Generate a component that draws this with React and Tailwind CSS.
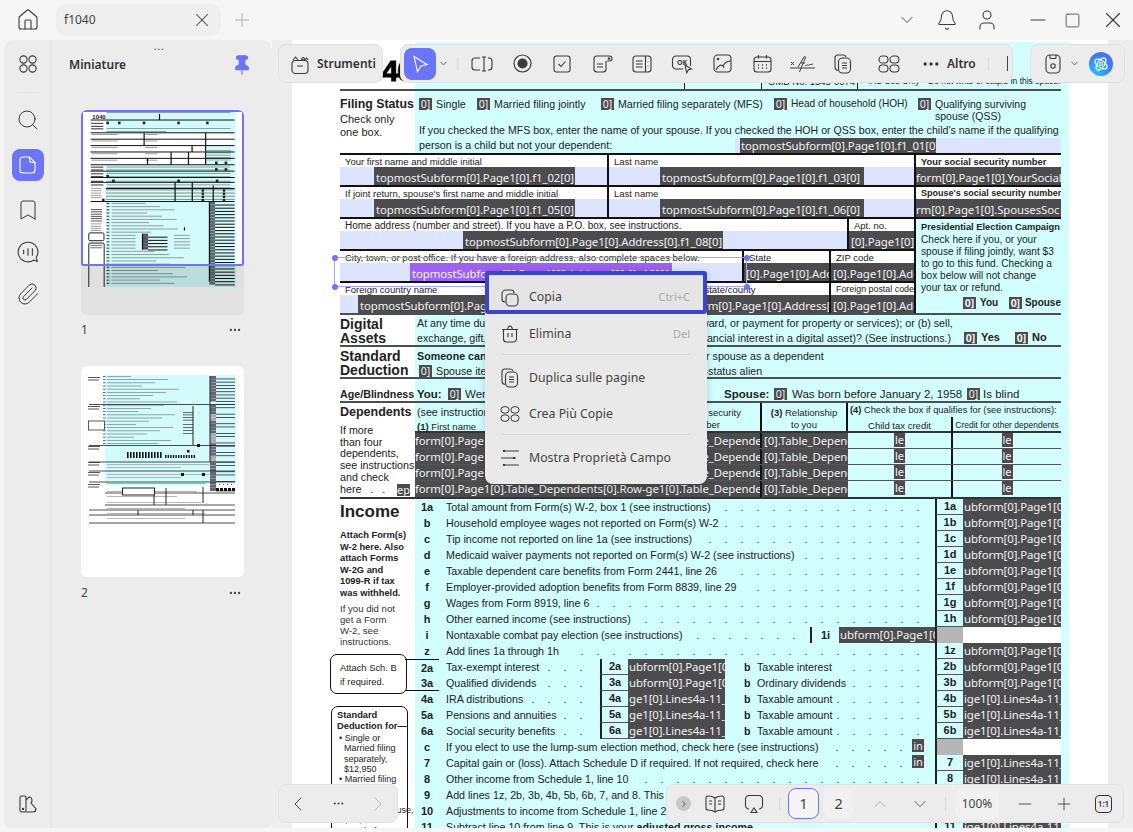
import React from 'react';
import { Home, X, Plus, ChevronDown, ChevronUp, ChevronLeft, ChevronRight, Bell, User, Minus, Square, Search, Bookmark, Paperclip, Pin, MoreHorizontal } from 'lucide-react';

const dark = "bg-[#4c4c4e] text-[#f2f2f2] font-['Noto_Sans',sans-serif] tracking-[-0.1px] whitespace-nowrap overflow-hidden";

function GridIcon({ wide }) {
  return (
    <svg width="22" height="20" viewBox="0 0 22 20" fill="none" stroke="#3a3a3a" strokeWidth="1.1">
      {wide ? (
        <>
          <rect x="1" y="2" width="9" height="7" rx="3.5" />
          <rect x="12" y="2" width="9" height="7" rx="3.5" />
          <rect x="1" y="11" width="9" height="7" rx="3.5" />
          <rect x="12" y="11" width="9" height="7" rx="3.5" />
        </>
      ) : (
        <>
          <circle cx="6.5" cy="5.5" r="3.6" />
          <circle cx="15.5" cy="5.5" r="3.6" />
          <circle cx="6.5" cy="14.5" r="3.6" />
          <circle cx="15.5" cy="14.5" r="3.6" />
        </>
      )}
    </svg>
  );
}

function CopyLines() {
  return (
    <svg width="20" height="22" viewBox="0 0 20 22" fill="none" stroke="#3a3a3a" strokeWidth="1.1">
      <path d="M5 17.5C2.8 17 2 16 2 14V5c0-2 1.2-3 3-3h5c1.6 0 2.5.6 3 1.8" />
      <rect x="5.5" y="5" width="12" height="15" rx="4" />
      <path d="M9 10h5M9 12.5h5M9 15h5" />
    </svg>
  );
}

function TopBar() {
  return (
    <div className="h-10 flex items-center text-[#3a3a3a] shrink-0">
      <div className="w-14 flex justify-center"><Home size={24} strokeWidth={1.1} /></div>
      <div className="w-[165px] h-8 rounded-[10px] bg-[#efefef] flex items-center justify-between pl-2 pr-[8px] text-[12px] text-[#444]">
        <span>f1040</span>
        <X size={22} strokeWidth={1.1} />
      </div>
      <div className="ml-[10px] text-[#aaa]"><Plus size={22} strokeWidth={1} /></div>
      <div className="flex-1" />
      <ChevronDown size={20} strokeWidth={1.1} />
      <div className="ml-[19px]"><Bell size={22} strokeWidth={1.1} /></div>
      <div className="ml-[17px]"><User size={24} strokeWidth={1.1} /></div>
      <div className="ml-[27px]"><Minus size={24} strokeWidth={1.1} /></div>
      <div className="ml-[14px]"><Square size={17} strokeWidth={1.1} /></div>
      <div className="ml-[19px] mr-[7px]"><X size={26} strokeWidth={1} /></div>
    </div>
  );
}

function ThumbRows({ rows }) {
  return rows.map((r, i) => <rect key={i} x={r[0]} y={r[1]} width={r[2]} height={r[3] || 4} fill={r[4] || '#777'} />);
}

function Thumb1() {
  const rows = [];
  for (let i = 0; i < 26; i++) {
    const y = 505 + i * 16;
    if (i < 10 || i > 14) rows.push([445, y, 170 + ((i * 73) % 210), 5, '#8d9f9f']);
    else rows.push([445, y, 120, 5, '#8d9f9f'], [757, y, 80, 5, '#8d9f9f'], [600, y - 6, 28, 16, '#556'], [628, y + 9, 97, 5, '#111']);
    rows.push([420, y, 14, 5, '#333']);
    rows.push([935, y - 6, 28, 15, '#5a6a70']);
    rows.push([963, y + 8, 98, 5, '#111']);
  }
  for (let y of [50, 130, 145, 323, 337, 355, 371, 394, 412, 426]) rows.push([420, y, y === 145 ? 300 : 620, 5, '#8d9f9f']);
  for (let y of [104, 119, 131, 323, 337, 356, 370, 394, 412]) rows.push([342, y, 62, 6, '#555']);
  for (let y of [161, 193, 225, 257, 289]) rows.push([345, y, 130, 4, '#888'], [614, y, 60, 4, '#888']);
  for (let y of [240, 252, 264, 276, 288]) rows.push([922, y, 120, 4, '#7f9393']);
  for (let y of [430, 442, 454, 465, 477]) rows.push([342, y, 52, 4, '#888']);
  for (let y of [536, 547, 559, 570, 581, 593]) rows.push([342, y, 55, 5, '#555']);
  for (let y of [608, 620, 630, 641]) rows.push([342, y, 50, 4, '#888']);
  for (let x of [419, 477, 601, 774, 918]) rows.push([x, 98, 13, 13, '#222']);
  for (let [x, y] of [[963, 298], [1011, 298], [963, 331], [1011, 331], [419, 365], [448, 388], [774, 388], [967, 388], [397, 484]]) rows.push([x, y, 13, 13, '#222']);
  for (let y of [437, 453, 469, 485]) rows.push([417, y, 644, 5, '#8a8a8a'], [896, y, 12, 12, '#222'], [1002, y, 12, 12, '#222']);
  return (
    <svg viewBox="292 40 816 1056" className="w-full h-full block">
      <rect x="292" y="40" width="816" height="1056" fill="#fff" />
      <rect x="415" y="42" width="654" height="1010" fill="#d3fbfb" />
      <rect x="415" y="155" width="646" height="160" fill="#fff" />
      <rect x="916" y="219" width="145" height="96" fill="#d3fbfb" />
      <rect x="963" y="627" width="98" height="16" fill="#fff" />
      <ThumbRows rows={rows} />
      <text x="349" y="84" fontSize="30" fontWeight="900" fontFamily="Liberation Sans" fill="#111">1040</text>
      <path d="M340 90H1061M340 154H1061M340 186H1061M340 218H1061M340 250H1061M340 282H1061M340 314H1061M340 346H1061M340 378H1061M340 402H1061M417 433H1061M340 498H1061" stroke="#111" strokeWidth="5" />
      <path d="M608 154V218M916 154V314M848 218V250M743 250V314M830 250V314M625 282V314M763 402V498M849 402V498M954 418V498M935 498V900M600 659V739M810 627V643M685 60V90" stroke="#111" strokeWidth="6" />
      <rect x="331" y="655" width="76" height="39" rx="6" fill="#fff" stroke="#222" strokeWidth="5" />
      <rect x="331" y="706" width="77" height="300" rx="6" fill="#fff" stroke="#222" strokeWidth="5" />
      <rect x="338" y="715" width="60" height="5" fill="#777" /><rect x="338" y="727" width="60" height="5" fill="#777" />
      <rect x="292" y="820" width="816" height="276" fill="#000" opacity=".12" />
    </svg>
  );
}

function Thumb2() {
  const rows = [];
  for (let i = 0; i < 22; i++) {
    const y = 10 + i * 3.2;
    rows.push([26, y, 24 + ((i * 37) % 50), 0.8, '#7f9393'], [22, y, 2.5, 0.8, '#444']);
  }
  for (let i = 0; i < 36; i++) {
    const y = 10 + i * 3.2;
    if (i !== 8) rows.push([129, y, 6, 3, i > 11 && i < 27 && i % 7 > 3 ? '#aaa' : '#667']);
    if (i % 3 !== 1 || i < 8) rows.push([135, y + 2.6, 19, 0.7, '#111']);
  }
  for (let i = 0; i < 12; i++) rows.push([46 + i * 3, 86, 1.6, 6, '#111']);
  for (let i = 0; i < 12; i++) rows.push([84 + i * 2.6, 89, 1.4, 3, '#111']);
  for (let i = 0; i < 4; i++) rows.push([102, 46 + i * 2.6, 10, 0.6, '#111'], [102, 58 + i * 3, 10, 0.6, '#111']);
  for (let i = 0; i < 5; i++) rows.push([135 + i * 4, 116, 3, 3, '#fff'], [135 + i * 4, 122, 3, 3, '#111']);
  for (let y of [11, 40, 80, 96, 106, 118]) rows.push([7, y, 12, 1, '#555'], [7, y + 2.5, 11, 1, '#555']);
  for (let y of [98, 101, 108, 111, 117, 125, 130, 136, 142, 147, 152]) rows.push([26, y, 70 + (y % 10) * 4, 0.7, '#999']);
  rows.push([106, 84, 2.5, 2.5, '#111'], [116, 78, 3, 3, '#111'], [100, 107, 3, 3, '#111'], [121, 107, 3, 3, '#111']);
  return (
    <svg viewBox="0 0 163 211" className="w-full h-full block">
      <rect x="0" y="0" width="163" height="211" fill="#fff" />
      <rect x="24" y="9" width="131" height="110" fill="#d3fbfb" />
      <ThumbRows rows={rows} />
      <path d="M8 38.5H154M8 79.5H154M8 96H154M8 105H154M8 116H154M24 127H154M24 139H154M8 144H154M8 149H154M8 157H154" stroke="#222" strokeWidth=".8" />
      <path d="M129 10V96M112 40V79M73 129V139M85 122V139M122 121V137M57 144V149M112 144V149M122 144V149M122 149V157" stroke="#222" strokeWidth="1" />
      <rect x="7.5" y="55" width="16" height="9" fill="#fff" stroke="#333" strokeWidth=".8" />
      <rect x="41.5" y="122" width="32" height="7" fill="#fff" stroke="#222" strokeWidth="1" />
    </svg>
  );
}

function Sidebar() {
  return (
    <div className="w-[268px] ml-1 flex bg-[#ececec] rounded-t-[10px] rounded-b-[6px] shrink-0 text-[#3a3a3a]">
      <div className="w-12 border-r border-[#e3e3e3] flex flex-col items-center pt-[14px]">
        <GridIcon />
        <div className="h-px w-5 bg-[#e4e4e4] mt-[18px] mb-[15px]" />
        <Search size={24} strokeWidth={1} />
        <div className="mt-[17px] w-8 h-8 rounded-lg bg-[#6c74f7] flex items-center justify-center">
          <svg width="18" height="20" viewBox="0 0 18 20" fill="none" stroke="#fff" strokeWidth="1.1">
            <path d="M4 2h6.5L16 7.5V15a3 3 0 0 1-3 3H4a3 3 0 0 1-3-3V5a3 3 0 0 1 3-3z" />
            <path d="M10.5 2v3a2.5 2.5 0 0 0 2.5 2.5h3" />
          </svg>
        </div>
        <div className="mt-[17px]"><Bookmark size={24} strokeWidth={1} /></div>
        <div className="mt-[18px]">
          <svg width="24" height="24" viewBox="0 0 22 22" fill="none" stroke="#3a3a3a" strokeWidth="1">
            <path d="M11 2a9 9 0 1 0 5 16.5l3.5 1-1-3.5A9 9 0 0 0 11 2z" />
            <path d="M7 9v4M11 7.5v7M15 7.5v7" />
          </svg>
        </div>
        <div className="mt-[18px]"><Paperclip size={24} strokeWidth={1} /></div>
        <div className="flex-1" />
        <div className="mb-[14px]">
          <svg width="20" height="20" viewBox="0 0 20 20" fill="none" stroke="#3a3a3a" strokeWidth="1.1">
            <rect x="2" y="2" width="6" height="16" rx="1.5" />
            <circle cx="5" cy="15" r=".6" fill="#3a3a3a" />
            <path d="M8 6l3-3c2 0 3 2 3 4l-1 2 5 6c0 2-1 3-3 3H8" />
          </svg>
        </div>
      </div>
      <div className="flex-1 relative px-[29px]">
        <div className="absolute top-[3px] left-[102px] text-[#666] text-[9px] leading-[8px] tracking-[1px] font-bold">...</div>
        <div className="flex items-center justify-between h-[48px] pt-[1px] -ml-3">
          <span className="text-[12px] font-semibold text-[#333]">Miniature</span>
          <span className="-mr-[10px] text-[#6c74f7]"><Pin size={22} fill="#6c74f7" strokeWidth={1.3} /></span>
        </div>
        <div className="mt-[22px] -mx-[0.5px] h-[205px] bg-[#e2e2e2] rounded-[6px] overflow-hidden relative">
          <div className="h-[177px] overflow-hidden"><div className="h-[211px]"><Thumb1 /></div></div>
          <div className="absolute inset-x-0 top-0 h-[156px] border-2 border-[#6c74f7] rounded-[2px]" />
        </div>
        <div className="flex justify-between items-center h-[30px] text-[12px] text-[#444]">
          <span>1</span>
          <MoreHorizontal size={14} className="mr-[1px]" />
        </div>
        <div className="mt-[21px] h-[211px] rounded-[6px] overflow-hidden -mx-[0.5px]"><Thumb2 /></div>
        <div className="flex justify-between items-center h-[32px] text-[12px] text-[#444]">
          <span>2</span>
          <MoreHorizontal size={14} className="mr-[1px]" />
        </div>
      </div>
    </div>
  );
}

function Check({ className = '' }) {
  return <span className={`${dark} inline-block w-[13px] h-[12px] text-[10.5px] leading-[12px] text-center shrink-0 ${className}`}>0]</span>;
}

function Opt({ className, children }) {
  return <div className={`flex items-start gap-[4px] ${className}`}><Check className="mt-[1px]" /><span className="leading-[14px] whitespace-nowrap">{children}</span></div>;
}

function Cell({ className = '', label, labelClass = 'text-[9.5px]', field = 'bg-[#dde4ff]', boxClass = '', text, purple }) {
  return (
    <div className={`flex flex-col border-r-2 border-[#111] bg-white ${className}`}>
      <div className={`h-[12px] pl-[5px] leading-[13px] whitespace-nowrap overflow-hidden ${labelClass}`}>{label}</div>
      <div className={`h-[18px] flex overflow-hidden ${field}`}>
        {text && (
          <span className={`${purple ? "bg-[#9c60f2] text-[#f2f2f2] font-['Noto_Sans',sans-serif] tracking-[-0.1px] whitespace-nowrap overflow-hidden" : dark} text-[11.4px] leading-[21px] px-[2px] ${boxClass}`}>{text}</span>
        )}
      </div>
    </div>
  );
}

function Dots({ n = 0, className = '' }) {
  return (
    <div className={`flex-1 min-w-0 flex justify-end ${className}`}>
      {Array.from({ length: n }).map((_, i) => <span key={i} className="w-4 text-center shrink-0">.</span>)}
    </div>
  );
}

function RightCode({ code, kind = 'Page', grey }) {
  const txt = kind === 'Page' ? 'ubform[0].Page1[0]' : 'ige1[0].Lines4a-11_';
  if (grey) {
    return (
      <>
        <div className="w-[28px] border-l-2 border-[#222] bg-[#b5b5b5] h-4 shrink-0" />
        <div className="w-[98px] bg-white h-4 shrink-0" />
      </>
    );
  }
  return (
    <>
      <div className="w-[28px] border-l-2 border-[#222] border-b border-b-[#555] font-bold text-[11px] text-center h-4 shrink-0 leading-[15px]">{code}</div>
      <div className={`${dark} w-[98px] h-4 shrink-0 text-[11.4px] leading-4 pl-[1px]`}>{txt}</div>
    </>
  );
}

function Label({ children, className = '' }) {
  return <div className={`w-[24px] text-center shrink-0 font-bold text-[11px] ${className}`}>{children}</div>;
}

function Line({ no, text, code, kind, grey, inBox, dots }) {
  return (
    <div className="flex h-4 leading-4">
      <Label>{no}</Label>
      <div className="w-[496px] pr-[9px] pl-[7px] flex shrink-0">
        <span className="shrink-0 whitespace-nowrap">{text}</span>
        <Dots n={dots} />
        {inBox && <span className={`${dark} w-[12px] h-[13px] text-[11px] leading-[13px] ml-[3px] mr-[2px] text-center shrink-0`}>in</span>}
      </div>
      <RightCode code={code} kind={kind} grey={grey} />
    </div>
  );
}

function SplitLine({ no, text, dots, mid, b, btext, bdots, code, kind, top }) {
  return (
    <div className="flex h-4 leading-4">
      <Label className={`-ml-[10px] w-[34px] pl-[10px] ${top ? 'border-t border-[#111]' : ''} ${no === '3a' ? 'border-b border-[#111]' : ''}`}>{no}</Label>
      <div className="w-[161px] pl-[7px] pr-[11px] flex shrink-0">
        <span className="shrink-0 whitespace-nowrap">{text}</span>
        <Dots n={dots} />
      </div>
      <div className="w-[28px] border-l-2 border-[#222] border-b border-b-[#555] font-bold text-[11px] text-center shrink-0 leading-[15px]">{mid}</div>
      <div className={`${dark} w-[97px] shrink-0 text-[11.4px] leading-4 pl-[1px]`}>{kind === 'Page' ? 'ubform[0].Page1[0]' : 'ge1[0].Lines4a-11_'}</div>
      <div className="w-[210px] flex shrink-0 pl-[19px] pr-[9px]">
        <span className="font-bold w-[13px] shrink-0">{b}</span>
        <span className="shrink-0 whitespace-nowrap">{btext}</span>
        <Dots n={bdots} />
      </div>
      <RightCode code={code} kind={kind} />
    </div>
  );
}

function Income() {
  return (
    <div className="flex text-[#222]">
      <div className="w-[75px] shrink-0">
        <div className="text-[17px] font-bold leading-[20px] pt-[3px] h-[30px]">Income</div>
        <div className="text-[9.3px] font-bold leading-[11.5px] mt-[1px] text-[#222] whitespace-nowrap">Attach Form(s)<br />W-2 here. Also<br />attach Forms<br />W-2G and<br />1099-R if tax<br />was withheld.</div>
        <div className="text-[9.6px] leading-[11px] mt-[4px] text-[#333] whitespace-nowrap">If you did not<br />get a Form<br />W-2, see<br />instructions.</div>
        <div className="-ml-[10px] w-[77px] h-[40px] mt-[7px] border border-[#111] rounded-[7px] text-[9.4px] leading-[14px] pl-[9px] pt-[6px] bg-white">Attach Sch. B<br />if required.</div>
        <div className="-ml-[9px] w-[77px] h-[200px] mt-[12px] border border-[#111] rounded-[7px] pl-[5px] pt-[3px] bg-white whitespace-nowrap">
          <div className="text-[9.3px] font-bold leading-[10.5px]">Standard<br />Deduction for—</div>
          <div className="text-[9px] leading-[10.3px] mt-[2px] pl-[2px]">• Single or<br />&nbsp; Married filing<br />&nbsp; separately,<br />&nbsp; $12,950<br />• Married filing<br />&nbsp; jointly or<br />&nbsp; Qualifying<br />&nbsp; surviving spouse,<br />&nbsp; $25,900<br />• Head of<br />&nbsp; household,</div>
        </div>
      </div>
      <div className="w-[646px] shrink-0">
        <Line no="1a" text="Total amount from Form(s) W-2, box 1 (see instructions)" dots={13} code="1a" />
        <Line no="b" text="Household employee wages not reported on Form(s) W-2" dots={13} code="1b" />
        <Line no="c" text="Tip income not reported on line 1a (see instructions)" dots={14} code="1c" />
        <Line no="d" text="Medicaid waiver payments not reported on Form(s) W-2 (see instructions)" dots={8} code="1d" />
        <Line no="e" text="Taxable dependent care benefits from Form 2441, line 26" dots={12} code="1e" />
        <Line no="f" text="Employer-provided adoption benefits from Form 8839, line 29" dots={11} code="1f" />
        <Line no="g" text="Wages from Form 8919, line 6" dots={21} code="1g" />
        <Line no="h" text="Other earned income (see instructions)" dots={18} code="1h" />
        <div className="flex h-4 leading-4">
          <Label>i</Label>
          <div className="w-[371px] pl-[7px] flex shrink-0 pr-[8px]">
            <span className="shrink-0 whitespace-nowrap">Nontaxable combat pay election (see instructions)</span>
            <Dots n={7} />
          </div>
          <div className="w-[29px] border-l-2 border-[#222] font-bold text-[11px] text-center shrink-0">1i</div>
          <div className={`${dark} w-[96px] shrink-0 text-[11.4px] leading-4 pl-[1px]`}>ubform[0].Page1[0]</div>
          <RightCode grey />
        </div>
        <Line no="z" text="Add lines 1a through 1h" dots={22} code="1z" />
        <SplitLine no="2a" top text="Tax-exempt interest" dots={3} mid="2a" b="b" btext="Taxable interest" bdots={5} code="2b" kind="Page" />
        <SplitLine no="3a" text="Qualified dividends" dots={3} mid="3a" b="b" btext="Ordinary dividends" bdots={5} code="3b" kind="Page" />
        <SplitLine no="4a" text="IRA distributions" dots={4} mid="4a" b="b" btext="Taxable amount" bdots={6} code="4b" kind="Lines" />
        <SplitLine no="5a" text="Pensions and annuities" dots={2} mid="5a" b="b" btext="Taxable amount" bdots={6} code="5b" kind="Lines" />
        <SplitLine no="6a" text="Social security benefits" dots={2} mid="6a" b="b" btext="Taxable amount" bdots={6} code="6b" kind="Lines" />
        <Line no="c" text="If you elect to use the lump-sum election method, check here (see instructions)" dots={5} grey inBox />
        <Line no="7" text="Capital gain or (loss). Attach Schedule D if required. If not required, check here" dots={5} code="7" kind="Lines" inBox />
        <Line no="8" text="Other income from Schedule 1, line 10" dots={18} code="8" kind="Lines" />
        <Line no="9" text="Add lines 1z, 2b, 3b, 4b, 5b, 6b, 7, and 8. This is your total income" dots={8} code="9" kind="Lines" />
        <Line no="10" text="Adjustments to income from Schedule 1, line 26" dots={15} code="10" kind="Lines" />
        <Line no="11" text={<>Subtract line 10 from line 9. This is your <b>adjusted gross income</b></>} dots={9} code="11" kind="Lines" />
      </div>
    </div>
  );
}

function DepRow({ last }) {
  return (
    <div className={`flex h-4 ${last ? '' : 'border-b border-[#555]'}`}>
      <div className={`${dark} w-[347px] text-[11.4px] leading-[16px] border-r-2 border-[#111]`}>form[0].Page1[0].Table_Dependents[0].Row-ge1[0].Table_Dependents[0].Row</div>
      <div className={`${dark} w-[86px] text-[11.4px] leading-[16px] pl-[2px]`}>[0].Table_Dependents</div>
      <div className="w-[105px] flex justify-center border-r-2 border-[#111]"><span className={`${dark} w-[11px] h-[14px] text-[11px] leading-[14px] text-center`}>le</span></div>
      <div className="w-[108px] flex justify-center"><span className={`${dark} w-[11px] h-[14px] text-[11px] leading-[14px] text-center`}>le</span></div>
    </div>
  );
}

function Form() {
  return (
    <div className="w-[729px] ml-12 mt-[2px] bg-[linear-gradient(to_right,#ffffff_75px,#d3fefe_75px)] font-['Liberation_Sans',Arial,sans-serif] text-[#222] text-[10.7px] leading-[14px]">
      <div className="w-[721px] h-[49px] border-b-2 border-[#4a5050] relative overflow-hidden">
        <span className="absolute left-[11px] top-[14px] text-[30px] font-bold leading-[30px] tracking-[-1.3px] text-black [-webkit-text-stroke:1px_black]">1040</span>
        <span className="absolute left-[100px] top-[28px] text-[15px] font-bold leading-[16px]">U.S. Individual Income Tax Return</span>
        <div className="absolute left-[344px] top-[28px] h-[20px] border-l border-[#222]" />
        <div className="absolute left-[421px] top-[28px] h-[20px] border-l border-[#222]" />
        <span className="absolute left-[428px] top-[34px] text-[9.5px] leading-[11px] whitespace-nowrap">OMB No. 1545-0074</span>
        <div className="absolute left-[517px] top-[28px] h-[20px] border-l border-[#222]" />
        <span className="absolute left-[528px] top-[34px] text-[8.5px] leading-[11px] whitespace-nowrap">IRS Use Only—Do not write or staple in this space.</span>
      </div>
      <div className="flex w-[721px] h-[64px] border-b-2 border-[#111]">
        <div className="w-[75px] shrink-0 pt-[6px]">
          <div className="text-[12.3px] font-bold leading-[14px] whitespace-nowrap">Filing Status</div>
          <div className="text-[11px] leading-[12.5px] mt-[2px]">Check only<br />one box.</div>
        </div>
        <div className="w-[646px] pl-[4px] pt-[6px]">
          <div className="flex h-[26px]">
            <Opt className="w-[58px]">Single</Opt>
            <Opt className="w-[124px]">Married filing jointly</Opt>
            <Opt className="w-[173px] text-[10.6px]">Married filing separately (MFS)</Opt>
            <Opt className="w-[144px] text-[10.1px]">Head of household (HOH)</Opt>
            <Opt className="flex-1 text-[10.5px]"><span className="block leading-[12px] pt-[1px]">Qualifying surviving<br />spouse (QSS)</span></Opt>
          </div>
          <div className="leading-[15px] h-[15px] whitespace-nowrap text-[10.6px]">If you checked the MFS box, enter the name of your spouse. If you checked the HOH or QSS box, enter the child's name if the qualifying</div>
          <div className="-ml-[4px] flex h-[15px]">
            <span className="pl-[4px] w-[320px] leading-[15px] shrink-0">person is a child but not your dependent:</span>
            <div className="flex-1 bg-[#dde4ff] flex pl-[5px]"><span className={`${dark} text-[11.4px] leading-[15px] pl-[1px] w-[196px]`}>topmostSubform[0].Page1[0].f1_01[0]</span></div>
          </div>
        </div>
      </div>
      <div className="flex w-[721px]">
        <div className="w-[576px] shrink-0">
          <div className="flex border-b-2 border-[#111]">
            <Cell className="w-[269px]" label="Your first name and middle initial" boxClass="ml-[34px] w-[201px]" text="topmostSubform[0].Page1[0].f1_02[0]" />
            <Cell className="w-[307px]" label="Last name" boxClass="ml-[51px] w-[204px]" text="topmostSubform[0].Page1[0].f1_03[0]" />
          </div>
          <div className="flex border-b-2 border-[#111]">
            <Cell className="w-[269px]" label="If joint return, spouse's first name and middle initial" boxClass="ml-[34px] w-[201px]" text="topmostSubform[0].Page1[0].f1_05[0]" />
            <Cell className="w-[307px]" label="Last name" boxClass="ml-[51px] w-[204px]" text="topmostSubform[0].Page1[0].f1_06[0]" />
          </div>
          <div className="flex border-b-2 border-[#111]">
            <Cell className="w-[509px]" labelClass="text-[10px]" label="Home address (number and street). If you have a P.O. box, see instructions." boxClass="ml-[123px] w-[260px]" text="topmostSubform[0].Page1[0].Address[0].f1_08[0]" />
            <Cell className="w-[67px]" label="Apt. no." field="bg-[#4c4c4e]" boxClass="w-full" text="[0].Page1[0].Address" />
          </div>
          <div className="flex border-b-2 border-[#111]">
            <Cell className="w-[404px]" label="City, town, or post office. If you have a foreign address, also complete spaces below." boxClass="ml-[70px] w-[262px]" purple text="topmostSubform[0].Page1[0].Address[0].f1_10[0]" />
            <Cell className="w-[87px]" label="State" field="bg-[#4c4c4e]" boxClass="w-full" text="[0].Page1[0].Address" />
            <Cell className="w-[85px]" label="ZIP code" field="bg-[#4c4c4e]" boxClass="w-full" text="[0].Page1[0].Address" />
          </div>
          <div className="flex border-b-2 border-[#4a5050]">
            <Cell className="w-[286px]" label="Foreign country name" boxClass="ml-[18px] w-[266px]" text="topmostSubform[0].Page1[0].Address[0].f1_11[0]" />
            <Cell className="w-[205px]" label="Foreign province/state/county" field="bg-[#4c4c4e]" boxClass="w-full" text="topmostSubform[0].Page1[0].Address[0].f1_12" />
            <Cell className="w-[85px]" label="Foreign postal code" labelClass="text-[8.9px]" field="bg-[#4c4c4e]" boxClass="w-full" text="[0].Page1[0].Address" />
          </div>
        </div>
        <div className="w-[145px] shrink-0 flex flex-col">
          <div className="h-[32px] bg-white border-b-2 border-[#111]">
            <div className="h-[12px] pl-[5px] text-[9.4px] font-bold leading-[13px] whitespace-nowrap">Your social security number</div>
            <div className={`${dark} h-[18px] text-[11.4px] leading-[21px]`}>form[0].Page1[0].YourSocial</div>
          </div>
          <div className="h-[32px] bg-white border-b-2 border-[#111]">
            <div className="h-[12px] pl-[5px] text-[9px] font-bold leading-[13px] whitespace-nowrap overflow-hidden">Spouse's social security number</div>
            <div className={`${dark} h-[18px] text-[11.4px] leading-[21px]`}>rm[0].Page1[0].SpousesSoc</div>
          </div>
          <div className="h-[96px] border-b-2 border-[#4a5050] pl-[5px] pt-[2px] text-[10.1px] leading-[12px] whitespace-nowrap">
            <div className="font-bold text-[9.3px] leading-[13px]">Presidential Election Campaign</div>
            Check here if you, or your<br />spouse if filing jointly, want $3<br />to go to this fund. Checking a<br />box below will not change<br />your tax or refund.
            <div className="flex h-[14px] mt-[2px] font-bold items-center pl-[42px] text-[10px]">
              <Check /><span className="ml-[4px] w-[31px]">You</span><Check /><span className="ml-[3px]">Spouse</span>
            </div>
          </div>
        </div>
      </div>
      <div className="flex w-[721px] h-[32px] border-b-2 border-[#4a5050]">
        <div className="w-[75px] shrink-0 text-[14px] font-bold leading-[14px] pt-[2px]">Digital<br />Assets</div>
        <div className="flex-1 pl-[2px] pt-[1px] leading-[15px] relative whitespace-nowrap">
          <div>At any time during 2022, did you: (a) receive (as a reward, award, or payment for property or services); or (b) sell,</div>
          <div>exchange, gift, or otherwise dispose of a digital asset (or a financial interest in a digital asset)? (See instructions.)</div>
          <div className="absolute left-[549px] top-[15px] flex items-center gap-[4px] font-bold text-[11px]">
            <Check /><span className="w-[30px]">Yes</span><Check /><span>No</span>
          </div>
        </div>
      </div>
      <div className="flex w-[721px] h-[32px] border-b-2 border-[#4a5050]">
        <div className="w-[75px] shrink-0 text-[14px] font-bold leading-[14px] pt-[2px] whitespace-nowrap">Standard<br />Deduction</div>
        <div className="flex-1 pl-[2px] pt-[1px] whitespace-nowrap">
          <div className="leading-[15px] h-[16px] flex items-center">
            <b className="w-[119px]">Someone can claim:</b>
            <Check /><span className="ml-[4px] w-[118px]">You as a dependent</span>
            <Check /><span className="ml-[4px]">Your spouse as a dependent</span>
          </div>
          <div className="flex items-center gap-[4px] leading-[14px] pl-[2px]"><Check /><span>Spouse itemizes on a separate return or you were a dual-status alien</span></div>
        </div>
      </div>
      <div className="flex w-[721px] h-[24px] border-b-2 border-[#4a5050]">
        <div className="w-[75px] shrink-0 text-[10.7px] font-bold leading-[14px] pt-[8px] whitespace-nowrap">Age/Blindness</div>
        <div className="flex-1 pl-[2px] pt-[8px] flex items-start text-[11.5px]">
          <span className="w-[31px] font-bold">You:</span>
          <Check className="mt-[1px]" />
          <span className="ml-[4px] w-[259px] whitespace-nowrap">Were born before January 2, 1958</span>
          <span className="w-[50px] font-bold">Spouse:</span>
          <Check className="mt-[1px]" />
          <span className="ml-[5px] w-[175px] whitespace-nowrap">Was born before January 2, 1958</span>
          <Check className="mt-[1px]" />
          <span className="ml-[3px] whitespace-nowrap">Is blind</span>
        </div>
      </div>
      <div className="flex w-[721px] border-b-2 border-[#333]">
        <div className="w-[75px] shrink-0 relative">
          <div className="text-[12.5px] font-bold leading-[14px] pt-[2px]">Dependents</div>
          <div className="text-[10.7px] leading-[11.7px] mt-[6px] whitespace-nowrap">If more<br />than four<br />dependents,<br />see instructions<br />and check<br />here &nbsp;&nbsp;.&nbsp;&nbsp;&nbsp;.</div>
          <span className={`${dark} absolute right-[5px] bottom-[1px] w-[13px] h-[12px] text-[11px] leading-[12px] text-center`}>ep</span>
        </div>
        <div className="w-[646px] shrink-0">
          <div className="flex h-[30px] border-b-2 border-[#333]">
            <div className="w-[347px] shrink-0 border-r-2 border-[#111] pl-[2px] pt-[3px] relative leading-[13px]">
              <div className="whitespace-nowrap">(see instructions):</div>
              <div className="text-[9.5px] mt-[1px]"><b>(1)</b> First name</div>
              <div className="absolute right-[19px] top-[4px] text-right text-[9.5px] leading-[12px] whitespace-nowrap">(2) Social security<br /><span className="pr-[21px]">number</span></div>
            </div>
            <div className="w-[86px] shrink-0 border-r-2 border-[#111] text-center text-[9.5px] leading-[12px] pt-[4px]"><b>(3)</b> Relationship<br />to you</div>
            <div className="flex-1">
              <div className="pl-[2px] text-[9.3px] leading-[12px] whitespace-nowrap pt-[1px]"><b>(4)</b> Check the box if qualifies for (see instructions):</div>
              <div className="flex text-center text-[9.5px] leading-[17px] h-[16px] mt-[1px]">
                <div className="w-[105px] border-r-2 border-[#111] whitespace-nowrap">Child tax credit</div>
                <div className="w-[108px] text-[8.5px] whitespace-nowrap">Credit for other dependents</div>
              </div>
            </div>
          </div>
          <DepRow /><DepRow /><DepRow /><DepRow last />
        </div>
      </div>
      <Income />
    </div>
  );
}

function Toolbars() {
  const ink = '#3a3a3a';
  return (
    <div className="absolute left-[6px] top-1 flex gap-[17px] font-['Noto_Sans',sans-serif]">
      <div className="w-[105px] h-[39px] rounded-lg bg-[#ececec] border border-[#e0e0e0] flex items-center pl-[11px] gap-[7px]">
        <svg width="20" height="22" viewBox="0 0 20 22" fill="none" stroke={ink} strokeWidth="1.1">
          <rect x="2" y="7.5" width="16" height="13" rx="3.5" />
          <path d="M7 13h6M3 7l2.5-3L8 7M13 4.5a1.3 1.3 0 1 0 .1 0M15 7l1.5-2 1.5 2" />
        </svg>
        <span className="text-[12px] font-semibold text-[#333]">Strumenti</span>
      </div>
      <div className="w-[613px] h-[39px] rounded-lg bg-[#ececec] border border-[#e0e0e0] flex items-center relative text-[#333]">
        <div className="ml-[3px] w-[32px] h-[32px] rounded-lg bg-[#6c74f7] flex items-center justify-center shrink-0">
          <svg width="18" height="18" viewBox="0 0 18 18" fill="none" stroke="#fff" strokeWidth="1.1"><path d="M3 1.5l13 8-6 1.5-3.5 5.5z" /></svg>
        </div>
        <div className="ml-[2px] w-[11px] text-[#555]"><ChevronDown size={11} /></div>
        <div className="ml-[8px] h-[14px] w-px bg-[#d8d8d8]" />
        <div className="ml-[12px] w-[24px] flex justify-center">
          <svg width="22" height="16" viewBox="0 0 22 16" fill="none" stroke={ink} strokeWidth="1.1">
            <path d="M9 2H4a3 3 0 0 0-3 3v6a3 3 0 0 0 3 3h5M17 2h1a3 3 0 0 1 3 3v6a3 3 0 0 1-3 3h-1M13 1v14M11 1h4M11 15h4" />
          </svg>
        </div>
        <div className="ml-[16px] w-[24px] flex justify-center">
          <svg width="19" height="19" viewBox="0 0 19 19" fill="none" stroke={ink} strokeWidth="1.2"><circle cx="9.5" cy="9.5" r="8.5" /><circle cx="9.5" cy="9.5" r="4.5" fill={ink} /></svg>
        </div>
        <div className="ml-[16px] w-[24px] flex justify-center">
          <svg width="18" height="18" viewBox="0 0 18 18" fill="none" stroke={ink} strokeWidth="1.1"><rect x="1" y="1" width="16" height="16" rx="2.5" /><path d="M5.5 9l2.5 2.5 4.5-5" /></svg>
        </div>
        <div className="ml-[16px] w-[24px] flex justify-center">
          <svg width="21" height="19" viewBox="0 0 21 19" fill="none" stroke={ink} strokeWidth="1.1">
            <path d="M2 5a3 3 0 0 1 3-3h12.5a2.5 2.5 0 0 1 0 5H15M2 5v10a3 3 0 0 0 3 3h6a3 3 0 0 0 3-3V7" /><circle cx="17" cy="4.5" r=".8" /><path d="M5 10h6M5 13h6" />
          </svg>
        </div>
        <div className="ml-[16px] w-[24px] flex justify-center">
          <svg width="20" height="18" viewBox="0 0 20 18" fill="none" stroke={ink} strokeWidth="1.1"><rect x="1" y="1" width="18" height="16" rx="3" /><path d="M13.5 1v16M4 6h6.5M4 9h6.5M4 12h6.5M16 6.5v.5M16 11v.5" /></svg>
        </div>
        <div className="ml-[16px] w-[24px] flex justify-center">
          <svg width="22" height="20" viewBox="0 0 22 20" fill="none" stroke={ink} strokeWidth="1.1">
            <path d="M12 15H5a3.5 3.5 0 0 1-3.5-3.5v-6A3.5 3.5 0 0 1 5 2h11a3.5 3.5 0 0 1 3.5 3.5V12" />
            <text x="6" y="11" fontSize="7" fontWeight="700" fill={ink} stroke="none" fontFamily="Noto Sans">OK</text>
            <path d="M14 11l6.5 4-3 .8-1.8 3z" />
          </svg>
        </div>
        <div className="ml-[16px] w-[24px] flex justify-center">
          <svg width="19" height="19" viewBox="0 0 19 19" fill="none" stroke={ink} strokeWidth="1.1"><rect x="1" y="1" width="17" height="17" rx="3.5" /><circle cx="5" cy="5" r=".8" /><path d="M3 16c2-5 7-7 8-2M10 12c1.5-3 4-5 8-5" /></svg>
        </div>
        <div className="ml-[16px] w-[24px] flex justify-center">
          <svg width="19" height="20" viewBox="0 0 19 20" fill="none" stroke={ink} strokeWidth="1.1"><rect x="1" y="3" width="17" height="15" rx="3" /><path d="M1 7.5h17M5.5 1v3.5M13.5 1v3.5" /><path d="M5 11h1M9 11h1M13 11h1M5 14h1M9 14h1M13 14h1" strokeWidth="1.5" /></svg>
        </div>
        <div className="ml-[14px] w-[28px] flex justify-center">
          <svg width="27" height="18" viewBox="0 0 27 18" fill="none" stroke={ink} strokeWidth="1"><path d="M1 13h25M2 7l3 3M5 7l-3 3" /><path d="M9 12c2-3 4-7 6-10 1-1.5 2 0 1 2-1.5 3-4 9-5.5 13M12 8h4M16 10c1 1 1 1 2 0s1 1 2 0 2 0 4-1" /></svg>
        </div>
        <div className="ml-[15px] w-[24px] flex justify-center"><CopyLines /></div>
        <div className="ml-[23px]"><GridIcon wide /></div>
        <div className="ml-[21px] text-[#333]"><MoreHorizontal size={20} strokeWidth={2} /></div>
        <span className="ml-[6px] text-[12px] font-semibold">Altro</span>
        <div className="ml-[12px] h-[14px] w-px bg-[#d8d8d8]" />
        <div className="ml-[18px] h-[15px] w-px bg-[#444]" />
      </div>
      <div className="w-[95px] h-[39px] rounded-lg bg-[#ececec] border border-[#e0e0e0] flex items-center">
        <div className="ml-[14px]">
          <svg width="16" height="20" viewBox="0 0 16 20" fill="none" stroke={ink} strokeWidth="1.1"><rect x="1" y="1" width="14" height="18" rx="4" /><circle cx="8" cy="12" r="2.2" /><path d="M5 1v2.5a1 1 0 0 0 1 1h4a1 1 0 0 0 1-1V1" /></svg>
        </div>
        <div className="ml-[8px] text-[#555]"><ChevronDown size={11} /></div>
        <div className="ml-[9px] w-[24px] h-[24px] rounded-full bg-[radial-gradient(circle_at_35%_75%,#25c4f0,#3f7bf5_60%,#5a63ee)] flex items-center justify-center">
          <svg width="16" height="16" viewBox="0 0 16 16" fill="none" stroke="#fff" strokeWidth="1.2"><ellipse cx="8" cy="8" rx="7" ry="3.5" transform="rotate(35 8 8)" /><ellipse cx="8" cy="8" rx="3.5" ry="7" transform="rotate(35 8 8)" /><circle cx="8" cy="8" r="1.5" /></svg>
        </div>
      </div>
    </div>
  );
}

function BottomBars() {
  return (
    <div className="absolute left-[6px] bottom-[5px] flex gap-[268px] font-['Noto_Sans',sans-serif] text-[#444]">
      <div className="w-[120px] h-[39px] rounded-lg bg-[#ececec] border border-[#e2e2e2] flex items-center justify-between px-[7px] ml-0">
        <ChevronLeft size={24} strokeWidth={1} />
        <MoreHorizontal size={13} />
        <span className="text-[#bbb]"><ChevronRight size={24} strokeWidth={1} /></span>
      </div>
      <div className="w-[458px] h-[39px] rounded-lg bg-[#ececec] border border-[#e2e2e2] flex items-center">
        <div className="ml-[9px] w-[15px] h-[15px] rounded-full bg-[#c8c8c8] flex items-center justify-center"><ChevronRight size={10} /></div>
        <div className="ml-[14px]">
          <svg width="20" height="18" viewBox="0 0 20 18" fill="none" stroke="#3a3a3a" strokeWidth="1.1"><path d="M10 3c-2-1.5-5-2-7-2a2 2 0 0 0-2 2v10a2 2 0 0 0 2 2c2 0 5 .5 7 2 2-1.5 5-2 7-2a2 2 0 0 0 2-2V3a2 2 0 0 0-2-2c-2 0-5 .5-7 2zM10 3v14M4 6h3M4 9h3M13 6h3M13 9h3" /></svg>
        </div>
        <div className="ml-[19px]">
          <svg width="20" height="20" viewBox="0 0 20 20" fill="none" stroke="#3a3a3a" strokeWidth="1.1"><path d="M5 15a3.5 3.5 0 0 1-3.5-3.5V5A3.5 3.5 0 0 1 5 1.5h10A3.5 3.5 0 0 1 18.5 5v6.5A3.5 3.5 0 0 1 15 15" /><path d="M10 14l3 4.5H7z" /></svg>
        </div>
        <div className="ml-[15px] h-[14px] w-px bg-[#d8d8d8]" />
        <div className="ml-[8px] w-[31px] h-[31px] rounded-lg border border-[#6c74f7] bg-[#f4f4f4] flex items-center justify-center text-[15px]">1</div>
        <div className="ml-[5px] w-[29px] h-[31px] rounded-lg bg-[#f1f1f1] flex items-center justify-center text-[15px]">2</div>
        <div className="ml-[17px] text-[#aaa]"><ChevronUp size={20} strokeWidth={1} /></div>
        <div className="ml-[20px]"><ChevronDown size={20} strokeWidth={1} /></div>
        <div className="ml-[15px] h-[14px] w-px bg-[#d8d8d8]" />
        <div className="ml-[9px] w-[44px] h-[31px] rounded-lg bg-[#f1f1f1] flex items-center justify-center text-[12px]">100%</div>
        <div className="ml-[16px]"><Minus size={20} strokeWidth={1.1} /></div>
        <div className="ml-[19px]"><Plus size={20} strokeWidth={1.1} /></div>
        <div className="ml-[21px] w-[17px] h-[18px] border border-[#333] rounded-[4px] flex items-center justify-center text-[8px] font-semibold text-[#333]">1:1</div>
      </div>
    </div>
  );
}

function Selection() {
  return (
    <div className="absolute left-[62px] top-[217px] w-[413px] h-[30px] border border-[#a3a8fb]">
      <span className="absolute -left-[3.5px] -top-[3.5px] w-[6px] h-[6px] rounded-full bg-[#6c74f7]" />
      <span className="absolute -right-[3.5px] -top-[3.5px] w-[6px] h-[6px] rounded-full bg-[#6c74f7]" />
      <span className="absolute -left-[3.5px] -bottom-[3.5px] w-[6px] h-[6px] rounded-full bg-[#6c74f7]" />
      <span className="absolute -right-[3.5px] -bottom-[3.5px] w-[6px] h-[6px] rounded-full bg-[#6c74f7]" />
    </div>
  );
}

function MenuItem({ icon, label, keys, h = 'h-9', pad = 'pl-[15px] pr-[17px] pt-[2px]' }) {
  return (
    <div className={`flex items-center ${h} ${pad} text-[12.3px] text-[#444]`}>
      <span className="w-[20px] flex justify-center shrink-0">{icon}</span>
      <span className="ml-[9px] flex-1">{label}</span>
      {keys && <span className="text-[11px] text-[#aaa]">{keys}</span>}
    </div>
  );
}

function ContextMenu() {
  return (
    <div className="absolute left-[213px] top-[231px] w-[222px] h-[213px] rounded-lg bg-[#e9e9e9] shadow-[0_2px_8px_rgba(0,0,0,0.18)] font-['Noto_Sans',sans-serif]">
      <div className="h-[43px] border-[4px] border-[#3a46c6] rounded-[3px] bg-[#e5e5e5]">
        <MenuItem
          h="h-[35px]"
          pad="pl-[11px] pr-[13px] pt-[10px]"
          label="Copia"
          keys="Ctrl+C"
          icon={<svg width="20" height="20" viewBox="0 0 20 20" fill="none" stroke="#3a3a3a" strokeWidth="1.1"><path d="M5 14a3 3 0 0 1-3-3V6a4 4 0 0 1 4-4h5a3 3 0 0 1 3 3" /><rect x="6" y="6" width="12" height="12" rx="4" /></svg>}
        />
      </div>
      <div className="mt-[1px]">
        <MenuItem
          label="Elimina"
          keys="Del"
          icon={<svg width="18" height="20" viewBox="0 0 18 20" fill="none" stroke="#3a3a3a" strokeWidth="1.1"><path d="M1 5.5h16M6.5 5.5C7 3 8 2 9 2s2 1 2.5 3.5M2.5 6v9a3 3 0 0 0 3 3h7a3 3 0 0 0 3-3V6M7 9v4M11 9v4" /></svg>}
        />
      </div>
      <div className="h-px mx-[17px] my-[3px] bg-[#d6d6d6]" />
      <div className="mt-[4px]"><MenuItem label="Duplica sulle pagine" icon={<CopyLines />} /></div>
      <MenuItem label="Crea Più Copie" icon={<GridIcon wide />} />
      <div className="h-px mx-[17px] my-[3px] bg-[#d6d6d6]" />
      <div className="mt-[4px]">
        <MenuItem
          label="Mostra Proprietà Campo"
          icon={<svg width="20" height="18" viewBox="0 0 20 18" fill="none" stroke="#3a3a3a" strokeWidth="1.1"><path d="M4 2h15M1 9h15M4 16h15" /><path d="M4 1v2M14 8v2M4 15v2" strokeWidth="2" /></svg>}
        />
      </div>
    </div>
  );
}

export default function App() {
  return (
    <div className="w-[1133px] h-[832px] bg-[#f6f6f6] flex flex-col overflow-hidden font-['Noto_Sans',sans-serif]">
      <TopBar />
      <div className="flex-1 flex min-h-0 pb-1">
        <Sidebar />
        <div className="flex-1 relative overflow-hidden bg-[#ededed]">
          <div className="ml-5 w-[816px] h-full bg-white overflow-hidden">
            <Form />
          </div>
          <Selection />
          <ContextMenu />
          <Toolbars />
          <BottomBars />
        </div>
      </div>
    </div>
  );
}
